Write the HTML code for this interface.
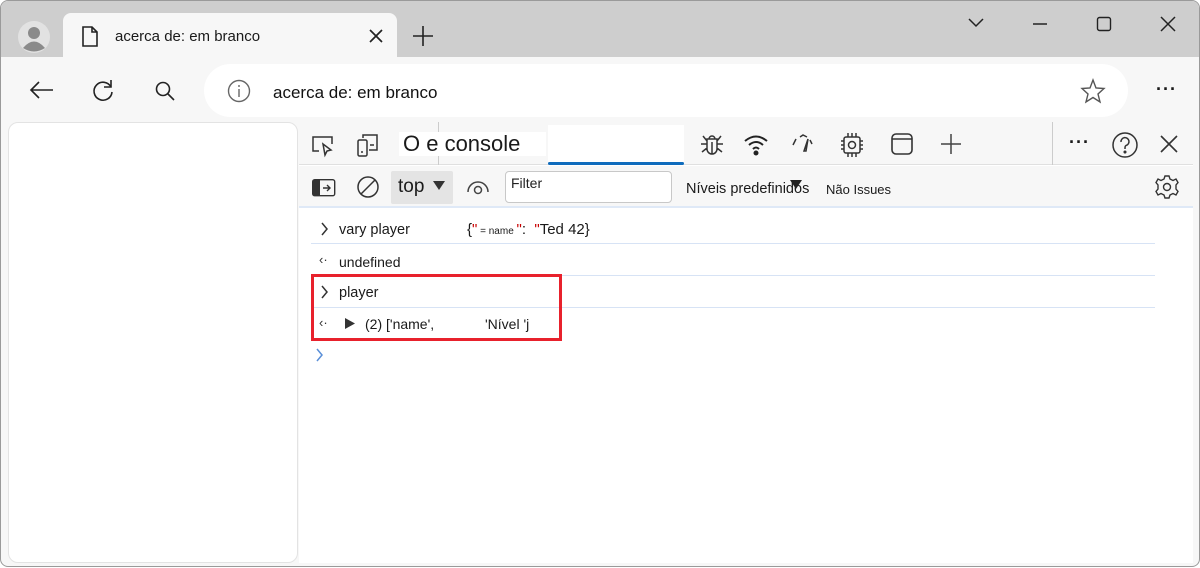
<!DOCTYPE html>
<html><head><meta charset="utf-8"><style>
*{margin:0;padding:0;box-sizing:border-box}
body{width:1200px;height:568px;background:#fff;font-family:"Liberation Sans",sans-serif;position:relative;overflow:hidden;color:#1a1a1a}
.win{position:absolute;left:0;top:0;width:1200px;height:567px;border:1px solid #9a9a9a;border-radius:8px;background:#f7f7f7;overflow:hidden}
.title{position:absolute;left:0;top:0;width:100%;height:56px;background:#cecece}
.tab{position:absolute;left:62px;top:12px;width:334px;height:46px;background:#f7f7f7;border-radius:8px 8px 0 0}
.abs{position:absolute}
svg{position:absolute;overflow:visible}
.addr{position:absolute;left:203px;top:63px;width:924px;height:53px;background:#fff;border-radius:27px}
.page{position:absolute;left:7px;top:121px;width:290px;height:441px;background:#fff;border:1px solid #e3e3e3;border-radius:10px}
.dev{position:absolute;left:298px;top:121px;width:894px;height:441px;background:#fff}
.tb1{position:absolute;left:0;top:0;width:894px;height:43px;background:#f7f7f7;border-bottom:1px solid #e0e0e0}
.tb2{position:absolute;left:0;top:44px;width:894px;height:42px;background:#f7f7f7;border-bottom:2px solid #dfe9f7}
.row{position:absolute;left:12px;width:844px;border-bottom:1px solid #d7e3f5;font-size:14.5px}
.t{position:absolute;white-space:nowrap}
</style></head><body>
<div class="win">
<div class="title"></div>
<svg style="left:17px;top:20px" width="32" height="32"><circle cx="16" cy="16" r="16" fill="#e2e2e2"/><circle cx="16" cy="12" r="6" fill="#8a8a8a"/><path d="M5 27 Q16 14 27 27 Q16 34 5 27Z" fill="#8a8a8a"/></svg>
<div class="tab"></div>
<svg style="left:80px;top:25px" width="18" height="22" fill="none" stroke="#222" stroke-width="1.6"><path d="M2 1H11L16 6V20H2Z"/><path d="M11 1V6H16"/></svg>
<div class="t" style="left:114px;top:27px;font-size:15px">acerca de: em branco</div>
<svg style="left:369px;top:29px" width="12" height="12" stroke="#222" stroke-width="1.7"><path d="M0 0L12 12M12 0L0 12"/></svg>
<svg style="left:412px;top:25px" width="20" height="20" stroke="#222" stroke-width="1.6"><path d="M10 0V20M0 10H20"/></svg>
<svg style="left:968px;top:18px" width="14" height="8" fill="none" stroke="#222" stroke-width="1.5"><path d="M0 0L7 7L14 0"/></svg>
<svg style="left:1032px;top:22px" width="14" height="2" stroke="#222" stroke-width="1.5"><path d="M0 1H14"/></svg>
<svg style="left:1096px;top:16px" width="14" height="14" fill="none" stroke="#222" stroke-width="1.4"><rect x="0.5" y="0.5" width="13" height="13" rx="2"/></svg>
<svg style="left:1160px;top:16px" width="14" height="14" stroke="#222" stroke-width="1.5"><path d="M0 0L14 14M14 0L0 14"/></svg>
<svg style="left:29px;top:80px" width="24" height="18" fill="none" stroke="#222" stroke-width="1.6"><path d="M9 1L1 9L9 17M1 9H23"/></svg>
<svg style="left:91px;top:78px" width="22" height="22" fill="none" stroke="#222" stroke-width="1.6"><path d="M19 8A9 9 0 1 0 20 13"/><path d="M19 1V8H12"/></svg>
<svg style="left:154px;top:80px" width="20" height="20" fill="none" stroke="#222" stroke-width="1.6"><circle cx="8" cy="8" r="6.5"/><path d="M13 13L19 19"/></svg>
<div class="addr"></div>
<svg style="left:227px;top:79px" width="22" height="22" fill="none" stroke="#666" stroke-width="1.4"><circle cx="11" cy="11" r="10.5"/><path d="M11 9V17M11 5V7"/></svg>
<div class="t" style="left:272px;top:82px;font-size:17px;color:#111">acerca de: em branco</div>
<svg style="left:1080px;top:78px" width="24" height="24" fill="none" stroke="#555" stroke-width="1.4"><path d="M12 1L15 9L23 9.5L17 15L19 23L12 18.5L5 23L7 15L1 9.5L9 9Z"/></svg>
<div class="t" style="left:1155px;top:78px;font-size:18px;letter-spacing:1px;font-weight:bold">···</div>
<div class="page"></div>
<div class="dev">
 <div class="tb1">
  <svg style="left:12px;top:14px" width="24" height="20" fill="none" stroke="#333" stroke-width="1.5"><path d="M8 15H2V1H21V8"/><path d="M12 8L14 19L16 15L20 14Z"/></svg>
  <svg style="left:58px;top:12px" width="22" height="24" fill="none" stroke="#333" stroke-width="1.5"><rect x="1" y="6" width="9" height="16" rx="1.5"/><path d="M6 4V1H20V16H12M4 18H6M13 11H17"/></svg>
  <div style="position:absolute;left:139px;top:0;width:1px;height:43px;background:#ccc"></div>
  <div class="t" style="left:100px;top:10px;width:147px;height:24px;background:#fff;font-size:22px;line-height:24px;padding-left:4px">O e console</div>
  <div class="abs" style="left:249px;top:3px;width:136px;height:37px;background:#fff"></div>
  <div class="abs" style="left:249px;top:40px;width:136px;height:3px;background:#0f6cbd;border-radius:2px"></div>
  <svg style="left:401px;top:10px" width="24" height="24" fill="none" stroke="#333" stroke-width="1.5"><path d="M7 7H17V17A5 5 0 0 1 7 17Z M9 7A3 3 0 0 1 15 7M12 10V22M7 12H1M17 12H23M7 16L2 20M17 16L22 20M7 9L3 4M17 9L21 4"/></svg>
  <svg style="left:445px;top:13px" width="24" height="20" fill="none" stroke="#222" stroke-width="2"><path d="M1 6Q12 -3 23 6M5 10Q12 4 19 10M9 14Q12 11 15 14"/><circle cx="12" cy="18" r="1.5" fill="#222"/></svg>
  <svg style="left:492px;top:12px" width="24" height="20" fill="none" stroke="#333" stroke-width="1.5"><path d="M2 11L5 5M9 3L12 1L16 3M21 10L19 6M13 17L17 5L15 17Z"/></svg>
  <svg style="left:541px;top:10px" width="24" height="26" fill="none" stroke="#333" stroke-width="1.5"><rect x="4" y="5" width="16" height="16" rx="2"/><circle cx="12" cy="13" r="3.5"/><path d="M8 5V1M12 5V1M16 5V1M8 21V25M12 21V25M16 21V25M4 9H1M4 13H1M4 17H1M20 9H23M20 13H23M20 17H23"/></svg>
  <svg style="left:592px;top:11px" width="22" height="22" fill="none" stroke="#333" stroke-width="1.6"><rect x="1" y="1" width="20" height="20" rx="4"/><path d="M1 6H21"/></svg>
  <svg style="left:642px;top:12px" width="20" height="20" stroke="#444" stroke-width="1.5"><path d="M10 0V20M0 10H20"/></svg>
  <div style="position:absolute;left:753px;top:0;width:1px;height:43px;background:#ccc"></div>
  <div class="t" style="left:770px;top:10px;font-size:18px;font-weight:bold;letter-spacing:1px">···</div>
  <svg style="left:813px;top:10px" width="26" height="26" fill="none" stroke="#333" stroke-width="1.5"><circle cx="13" cy="13" r="12"/><path d="M9 10A4 4 0 1 1 14 13.5Q13 14 13 16V17"/><circle cx="13" cy="20" r="0.8" fill="#333"/></svg>
  <svg style="left:862px;top:14px" width="16" height="16" stroke="#333" stroke-width="1.6"><path d="M0 0L16 16M16 0L0 16"/></svg>
 </div>
 <div class="tb2">
  <svg style="left:13px;top:13px" width="24" height="18"><rect x="0.7" y="0.7" width="22" height="16" rx="2" fill="none" stroke="#333" stroke-width="1.4"/><rect x="1" y="1" width="7" height="15" fill="#333"/><path d="M11 9H18M15 6L18 9L15 12" stroke="#333" stroke-width="1.4" fill="none"/></svg>
  <svg style="left:58px;top:10px" width="22" height="22" fill="none" stroke="#333" stroke-width="1.5"><circle cx="11" cy="11" r="10"/><path d="M4 18L18 4"/></svg>
  <div class="abs" style="left:92px;top:5px;width:62px;height:33px;background:#e4e4e4;border-radius:2px"></div>
  <div class="t" style="left:99px;top:10px;font-size:19px">top</div>
  <svg style="left:134px;top:15px" width="12" height="9"><path d="M0 0H12L6 9Z" fill="#333"/></svg>
  <svg style="left:168px;top:14px" width="22" height="14" fill="none" stroke="#444" stroke-width="1.5"><path d="M1 12A10 10 0 0 1 21 12"/><circle cx="11" cy="10" r="3.5"/></svg>
  <div class="abs" style="left:206px;top:5px;width:167px;height:32px;background:#fff;border:1px solid #c8c8c8;border-radius:4px"></div>
  <div class="t" style="left:212px;top:9px;font-size:14px;color:#222">Filter</div>
  <div class="t" style="left:387px;top:15px;font-size:14.5px">Níveis predefinidos</div>
  <svg style="left:491px;top:14px" width="12" height="9"><path d="M0 0H12L6 9Z" fill="#222"/></svg>
  <div class="t" style="left:527px;top:16px;font-size:13px">Não Issues</div>
  <svg style="left:856px;top:9px" width="24" height="24" fill="none" stroke="#333" stroke-width="1.4"><path d="M10 1H14L15 4L18 5.5L21 4L23 7.5L21 10V14L23 16.5L21 20L18 18.5L15 20L14 23H10L9 20L6 18.5L3 20L1 16.5L3 14V10L1 7.5L3 4L6 5.5L9 4Z"/><circle cx="12" cy="12" r="3.5"/></svg>
 </div>
 <div class="row" style="top:91px;height:31px">
  <svg style="left:10px;top:10px" width="7" height="12" fill="none" stroke="#333" stroke-width="1.5"><path d="M1 0L6 6L1 12"/></svg>
  <div class="t" style="left:28px;top:9px">vary player</div>
  <div class="t" style="left:156px;top:8px;font-size:15px">{<span style="color:#c80000">"</span><span style="font-size:10px"> = name </span><span style="color:#c80000">"</span>:&nbsp; <span style="color:#c80000">"</span>Ted 42}</div>
 </div>
 <div class="row" style="top:123px;height:31px">
  <div class="t" style="left:8px;top:7px;font-size:13px;color:#333">&lsaquo;·</div>
  <div class="t" style="left:28px;top:9px;font-size:14px">undefined</div>
 </div>
 <div class="row" style="top:155px;height:31px">
  <svg style="left:10px;top:9px" width="7" height="12" fill="none" stroke="#333" stroke-width="1.5"><path d="M1 0L6 6L1 12"/></svg>
  <div class="t" style="left:28px;top:8px">player</div>
 </div>
 <div class="t" style="left:20px;top:193px;font-size:13px;color:#333">&lsaquo;·</div>
 <svg style="left:46px;top:196px" width="10" height="11"><path d="M0 0L10 5.5L0 11Z" fill="#333"/></svg>
 <div class="t" style="left:66px;top:194px;font-size:14px">(2) ['name',</div>
 <div class="t" style="left:186px;top:194px;font-size:14px">'Nível 'j</div>
 <svg style="left:17px;top:227px" width="7" height="12" fill="none" stroke="#5a8fd8" stroke-width="1.5"><path d="M1 0L6 6L1 12"/></svg>
 <div class="abs" style="left:12px;top:152px;width:251px;height:67px;border:3px solid #e8212c"></div>
</div>
</div>
</body></html>
